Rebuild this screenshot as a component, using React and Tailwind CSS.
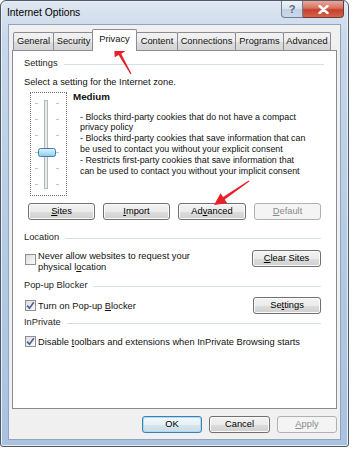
import React from 'react'

// Win7-style push button
const Btn = ({ children, className = '', disabled = false, primary = false }) => {
  const look = disabled
    ? 'border-[#adb2b5] bg-[#f4f4f4] text-[#8a8a8a]'
    : primary
    ? 'border-[#3c7fb1] bg-[linear-gradient(180deg,#f3f9fc_0%,#e6f0f6_50%,#d7e6ef_51%,#cadbe6_100%)] shadow-[inset_0_0_0_1px_#a8dcf5] text-black'
    : 'border-[#707070] bg-[linear-gradient(180deg,#f2f2f2_0%,#ebebeb_50%,#dddddd_51%,#cfcfcf_100%)] shadow-[inset_0_0_0_1px_#fbfbfb] text-black'
  return (
    <div className={`h-[17px] rounded-[3px] border flex items-center justify-center leading-none ${look} ${className}`}>
      {children}
    </div>
  )
}

const U = ({ children }) => <span className="underline underline-offset-[1px]">{children}</span>

const GroupLine = ({ label, className = '' }) => (
  <div className={`flex items-center h-[14px] ${className}`}>
    <span className="text-[#1e1e1e]">{label}</span>
    <div className="flex-1 h-px bg-[#d5dfe5] ml-[6px]" />
  </div>
)

const Check = ({ checked }) => (
  <div className="w-[11px] h-[11px] border border-[#8e8f8f] bg-[linear-gradient(135deg,#dcdcdc,#fbfbfb)] flex items-center justify-center shrink-0">
    {checked && (
      <svg width="9" height="9" viewBox="0 0 9 9">
        <path d="M1.2 4.6 L3.5 7.2 L7.8 1.2" fill="none" stroke="#4a5f97" strokeWidth="1.6" />
      </svg>
    )}
  </div>
)

const Tab = ({ label, className = '' }) => (
  <div className={`h-[18px] -ml-px first:ml-0 border border-b-0 border-[#898c95] bg-[linear-gradient(180deg,#f2f2f2_0%,#ebebeb_50%,#dddddd_51%,#d4d4d4_100%)] flex items-center justify-center rounded-t-[2px] ${className}`}>
    {label}
  </div>
)

const Slider = () => {
  const ticks = [10, 26, 42, 59, 75, 91]
  return (
    <div className="w-[37px] h-[104px] border border-dotted border-[#6f6f6f] shrink-0">
      <svg width="35" height="102" viewBox="0 0 35 102">
        <rect x="13.5" y="7.5" width="3" height="88" fill="#e7eaea" stroke="#b6b9bb" />
        {ticks.map((t) => (
          <g key={t}>
            <line x1="4" y1={t + 0.5} x2="7" y2={t + 0.5} stroke="#c4c4c4" />
            <line x1="25" y1={t + 0.5} x2="28" y2={t + 0.5} stroke="#c4c4c4" />
          </g>
        ))}
        <defs>
          <linearGradient id="thumb" x1="0" y1="0" x2="0" y2="1">
            <stop offset="0" stopColor="#e3f4fc" />
            <stop offset="0.5" stopColor="#b5e1f7" />
            <stop offset="1" stopColor="#86cbee" />
          </linearGradient>
        </defs>
        <rect x="7.5" y="55.5" width="17" height="8" rx="2" fill="url(#thumb)" stroke="#3c7fb1" />
      </svg>
    </div>
  )
}

export default function App() {
  return (
    <div className="relative w-[353px] h-[450px] bg-white overflow-hidden text-[9.3px] text-[#111] font-['Liberation_Sans',Arial,sans-serif]">
      {/* window frame */}
      <div className="w-[349px] h-[447px] border border-[#505a66] rounded-t-[6px] rounded-b-[3px] bg-[linear-gradient(180deg,#dfe7f1_0%,#c9d8ea_8%,#b7cce4_50%,#a9c2df_100%)] flex flex-col shadow-[inset_0_0_0_1px_#e6eef7]">
        {/* title bar */}
        <div className="h-[23px] flex items-start">
          <div className="pl-[6px] pt-[5px] text-[10.3px] leading-[13px] text-black">Internet Options</div>
          <div className="ml-auto mr-[4px] flex h-[17px]">
            <div className="w-[22px] h-[17px] rounded-bl-[4px] border border-t-0 border-[#6d7f95] bg-[linear-gradient(180deg,#eef3f8_0%,#d8e2ee_50%,#c2d1e2_51%,#c9d8ea_100%)] flex items-center justify-center text-[11px] font-bold text-[#5c6b7d] leading-none">
              ?
            </div>
            <div className="w-[41px] h-[17px] rounded-br-[4px] border border-t-0 border-l-0 border-[#6d3b33] bg-[linear-gradient(180deg,#e9a99b_0%,#d7705d_45%,#c4402c_55%,#d5634d_100%)] flex items-center justify-center">
              <svg width="11" height="9" viewBox="0 0 11 9">
                <path d="M1.5 1 L9.5 8 M9.5 1 L1.5 8" stroke="#ffffff" strokeWidth="2.4" strokeLinecap="round" />
              </svg>
            </div>
          </div>
        </div>

        {/* dialog body */}
        <div className="mx-[7px] mb-[6px] flex-1 border border-[#8fa4bf] bg-[#f0f0f0] flex flex-col">
          {/* tabs */}
          <div className="h-[25px] flex items-end pl-[4px] relative z-10">
            <Tab label="General" className="w-[41px]" />
            <Tab label="Security" className="w-[41px]" />
            <div className="-ml-[2px] h-[22px] w-[45px] border border-b-0 border-[#898c95] bg-white flex items-start justify-center pt-[3px] -mb-px rounded-t-[2px] z-10">
              Privacy
            </div>
            <Tab label="Content" className="w-[42px]" />
            <Tab label="Connections" className="w-[59px]" />
            <Tab label="Programs" className="w-[49px]" />
            <Tab label="Advanced" className="w-[48px]" />
          </div>

          {/* tab panel */}
          <div className="mx-[3px] h-[359px] border border-[#898c95] bg-white pl-[11px] pr-[12px] pt-[6px] flex flex-col">
            <GroupLine label="Settings" />
            <div className="mt-[5px] h-[12px] leading-[12px]">Select a setting for the Internet zone.</div>

            <div className="mt-[4px] flex">
              <div className="ml-[6px]">
                <Slider />
              </div>
              <div className="ml-[6px] -mt-px">
                <div className="h-[12px] leading-[12px] font-bold text-[9.8px]">Medium</div>
                <div className="mt-[8.6px] ml-[7px] leading-[10.8px] whitespace-nowrap text-[8.9px]">
                  - Blocks third-party cookies that do not have a compact
                  <br />
                  privacy policy
                  <br />
                  - Blocks third-party cookies that save information that can
                  <br />
                  be used to contact you without your explicit consent
                  <br />
                  - Restricts first-party cookies that save information that
                  <br />
                  can be used to contact you without your implicit consent
                </div>
              </div>
            </div>

            <div className="mt-[7px] ml-[4px] flex gap-[8px]">
              <Btn className="w-[67px]"><U>S</U>ites</Btn>
              <Btn className="w-[67px]"><U>I</U>mport</Btn>
              <Btn className="w-[68px]">Ad<U>v</U>anced</Btn>
              <Btn className="w-[67px]" disabled><U>D</U>efault</Btn>
            </div>

            <GroupLine label="Location" className="mt-[11px] pr-[3px]" />
            <div className="mt-[5px] flex items-start pr-[3px]">
              <div className="ml-[1px] mt-[4px]">
                <Check />
              </div>
              <div className="ml-[2px] leading-[10.5px] mt-[1px]">
                Never allow websites to request your
                <br />
                physical l<U>o</U>cation
              </div>
              <Btn className="ml-auto w-[69px]"><U>C</U>lear Sites</Btn>
            </div>

            <GroupLine label="Pop-up Blocker" className="mt-[7px] pr-[3px]" />
            <div className="mt-[4px] flex items-center pr-[3px] h-[17px]">
              <div className="ml-[1px]">
                <Check checked />
              </div>
              <div className="ml-[2px] leading-[12px]">Turn on Pop-up <U>B</U>locker</div>
              <Btn className="ml-auto w-[68px]">Se<U>t</U>tings</Btn>
            </div>

            <GroupLine label="InPrivate" className="mt-[2px] pr-[3px]" />
            <div className="mt-[5px] flex items-center h-[13px]">
              <div className="ml-[1px]">
                <Check checked />
              </div>
              <div className="ml-[2px] leading-[12px] whitespace-nowrap">
                Disable <U>t</U>oolbars and extensions when InPrivate Browsing starts
              </div>
            </div>
          </div>

          {/* dialog buttons */}
          <div className="mt-[7px] pr-[3px] flex justify-end gap-[7px]">
            <Btn className="w-[60px]" primary>OK</Btn>
            <Btn className="w-[61px]">Cancel</Btn>
            <Btn className="w-[60px]" disabled><U>A</U>pply</Btn>
          </div>
        </div>
      </div>

      {/* red annotation arrows */}
      <svg className="absolute inset-0 pointer-events-none" width="353" height="450" viewBox="0 0 353 450">
        <polygon
          points="114,44 125.1,51.5 121.2,53.7 131.5,73.7 130.5,74.3 118.6,55.1 114.7,57.3"
          fill="#e8202a"
        />
        <polygon
          points="214,205 227.3,203.2 224.7,199.4 249.3,181.5 248.7,180.5 223.1,197 220.5,193.2"
          fill="#e8202a"
        />
      </svg>
    </div>
  )
}
